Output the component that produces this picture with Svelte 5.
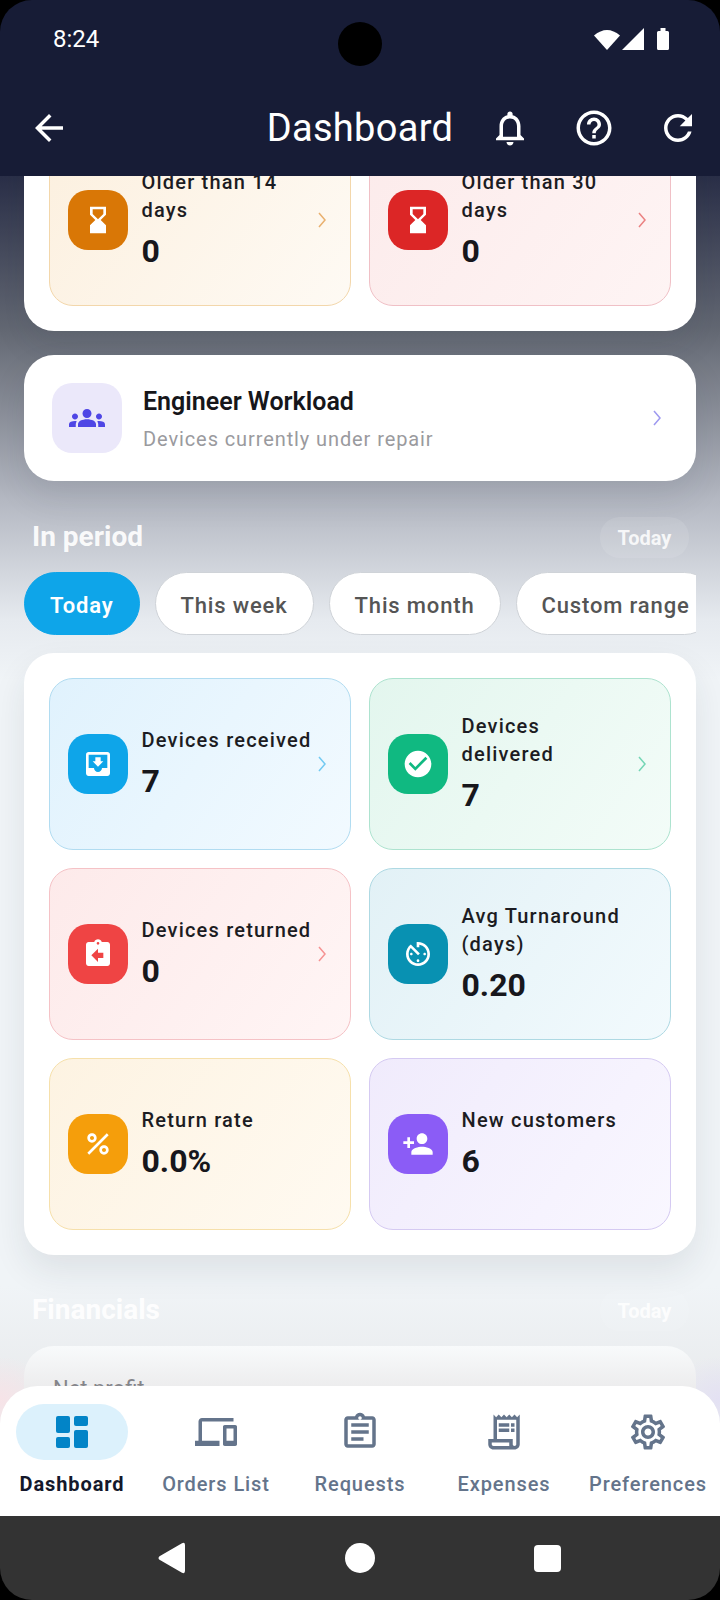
<script>
  const icons = {
    hourglass: 'M18 22l-.01-6L14 12l3.99-4.01L18 2H6v6l4 4-4 3.99V22h12zM8 7.5V4h8v3.5l-4 4-4-4z',
    inbox: 'M19 3H4.99c-1.11 0-1.98.89-1.98 2L3 19c0 1.1.88 2 1.99 2H19c1.1 0 2-.9 2-2V5c0-1.11-.9-2-2-2zm0 12h-4c0 1.66-1.35 3-3 3s-3-1.34-3-3H4.99V5H19v10zm-3-5h-2V7h-4v3H8l4 4 4-4z',
    check: 'M12 2C6.48 2 2 6.48 2 12s4.48 10 10 10 10-4.48 10-10S17.52 2 12 2zm-2 15l-5-5 1.41-1.41L10 14.17l7.59-7.59L19 8l-9 9z',
    ret: 'M19 3h-4.18C14.4 1.84 13.3 1 12 1c-1.3 0-2.4.84-2.82 2H5c-1.1 0-2 .9-2 2v14c0 1.1.9 2 2 2h14c1.1 0 2-.9 2-2V5c0-1.1-.9-2-2-2zm-7 0c.55 0 1 .45 1 1s-.45 1-1 1-1-.45-1-1 .45-1 1-1zm4 12h-4v3l-5-5 5-5v3h4v4z',
    timer: 'M11 17c0 .55.45 1 1 1s1-.45 1-1-.45-1-1-1-1 .45-1 1zm0-14v4h2V5.08c3.39.49 6 3.39 6 6.92 0 3.87-3.13 7-7 7s-7-3.13-7-7c0-1.68.59-3.22 1.58-4.42L12 13l1.41-1.41-6.8-6.8v.02C4.42 6.45 3 9.05 3 12c0 4.97 4.02 9 9 9 4.97 0 9-4.03 9-9s-4.03-9-9-9h-1zm7 9c0-.55-.45-1-1-1s-1 .45-1 1 .45 1 1 1 1-.45 1-1zM6 12c0 .55.45 1 1 1s1-.45 1-1-.45-1-1-1-1 .45-1 1z',
    percent: 'M7.5 11C9.43 11 11 9.43 11 7.5S9.43 4 7.5 4 4 5.57 4 7.5 5.57 11 7.5 11zm0-5C8.33 6 9 6.67 9 7.5S8.33 9 7.5 9 6 8.33 6 7.5 6.67 6 7.5 6zM4.0025 18.5832 18.59 3.996 20.0042 5.4102 5.4167 19.9974zM16.5 13c-1.93 0-3.5 1.57-3.5 3.5s1.57 3.5 3.5 3.5 3.5-1.57 3.5-3.5-1.57-3.5-3.5-3.5zm0 5c-.83 0-1.5-.67-1.5-1.5s.67-1.5 1.5-1.5 1.5.67 1.5 1.5-.67 1.5-1.5 1.5z',
    person: 'M15 12c2.21 0 4-1.79 4-4s-1.79-4-4-4-4 1.79-4 4 1.79 4 4 4zm-9-2V7H4v3H1v2h3v3h2v-3h3v-2H6zm9 4c-2.67 0-8 1.34-8 4v2h16v-2c0-2.66-5.33-4-8-4z',
    groups: 'M12 12.75c1.63 0 3.07.39 4.24.9 1.08.48 1.76 1.56 1.76 2.73V18H6v-1.61c0-1.18.68-2.26 1.76-2.73 1.17-.52 2.61-.91 4.24-.91zM4 13c1.1 0 2-.9 2-2s-.9-2-2-2-2 .9-2 2 .9 2 2 2zm1.13 1.1c-.37-.06-.74-.1-1.13-.1-.99 0-1.93.21-2.78.58C.48 14.9 0 15.62 0 16.43V18h4.5v-1.61c0-.83.23-1.61.63-2.29zM20 13c1.1 0 2-.9 2-2s-.9-2-2-2-2 .9-2 2 .9 2 2 2zm4 3.43c0-.81-.48-1.53-1.22-1.85-.85-.37-1.79-.58-2.78-.58-.39 0-.76.04-1.13.1.4.68.63 1.46.63 2.29V18H24v-1.57zM12 6c1.66 0 3 1.34 3 3s-1.34 3-3 3-3-1.34-3-3 1.34-3 3-3z',
    devices: 'M4 6h18V4H4c-1.1 0-2 .9-2 2v11H0v3h14v-3H4V6zm19 2h-6c-.55 0-1 .45-1 1v10c0 .55.45 1 1 1h6c.55 0 1-.45 1-1V9c0-.55-.45-1-1-1zm-1 9h-4v-7h4v7z',
    assignment: 'M19 3h-4.18C14.4 1.84 13.3 1 12 1c-1.3 0-2.4.84-2.82 2H5c-1.1 0-2 .9-2 2v14c0 1.1.9 2 2 2h14c1.1 0 2-.9 2-2V5c0-1.1-.9-2-2-2zm-7 0c.55 0 1 .45 1 1s-.45 1-1 1-1-.45-1-1 .45-1 1-1zm7 16H5V5h14v14zM7 7h10v2H7zm0 4h10v2H7zm0 4h7v2H7z',
    receipt: 'M19.5 3.5 18 2l-1.5 1.5L15 2l-1.5 1.5L12 2l-1.5 1.5L9 2 7.5 3.5 6 2v14H3v3c0 1.66 1.34 3 3 3h12c1.66 0 3-1.34 3-3V2l-1.5 1.5zM15 20H6c-.55 0-1-.45-1-1v-1h10v2zm4-1c0 .55-.45 1-1 1s-1-.45-1-1v-3H8V5h11v14zM9 7h6v2H9zM16 7h2v2h-2zM9 10h6v2H9zM16 10h2v2h-2z',
    settings: 'M19.43 12.98c.04-.32.07-.64.07-.98 0-.34-.03-.66-.07-.98l2.11-1.65c.19-.15.24-.42.12-.64l-2-3.46c-.09-.16-.26-.25-.44-.25-.06 0-.12.01-.17.03l-2.49 1c-.52-.4-1.08-.73-1.69-.98l-.38-2.65C14.46 2.18 14.25 2 14 2h-4c-.25 0-.46.18-.49.42l-.38 2.65c-.61.25-1.17.59-1.69.98l-2.49-1c-.06-.02-.12-.03-.18-.03-.17 0-.34.09-.43.25l-2 3.46c-.13.22-.07.49.12.64l2.11 1.65c-.04.32-.07.65-.07.98 0 .33.03.66.07.98l-2.11 1.65c-.19.15-.24.42-.12.64l2 3.46c.09.16.26.25.44.25.06 0 .12-.01.17-.03l2.49-1c.52.4 1.08.73 1.69.98l.38 2.65c.03.24.24.42.49.42h4c.25 0 .46-.18.49-.42l.38-2.65c.61-.25 1.17-.59 1.69-.98l2.49 1c.06.02.12.03.18.03.17 0 .34-.09.43-.25l2-3.46c.12-.22.07-.49-.12-.64l-2.11-1.65zm-1.98-1.71c.04.31.05.52.05.73 0 .21-.02.43-.05.73l-.14 1.13.89.7 1.08.84-.7 1.21-1.27-.51-1.04-.42-.9.68c-.43.32-.84.56-1.25.73l-1.06.43-.16 1.13-.2 1.35h-1.4l-.19-1.35-.16-1.13-1.06-.43c-.43-.18-.83-.41-1.23-.71l-.91-.7-1.06.43-1.27.51-.7-1.21 1.08-.84.89-.7-.14-1.13c-.03-.31-.05-.54-.05-.74s.02-.43.05-.73l.14-1.13-.89-.7-1.08-.84.7-1.21 1.27.51 1.04.42.9-.68c.43-.32.84-.56 1.25-.73l1.06-.43.16-1.13.2-1.35h1.39l.19 1.35.16 1.13 1.06.43c.43.18.83.41 1.23.71l.91.7 1.06-.43 1.27-.51.7 1.21-1.07.85-.89.7.14 1.13zM12 8c-2.21 0-4 1.79-4 4s1.79 4 4 4 4-1.79 4-4-1.79-4-4-4zm0 6c-1.1 0-2-.9-2-2s.9-2 2-2 2 .9 2 2-.9 2-2 2z',
    bell: 'M12 22c1.1 0 2-.9 2-2h-4c0 1.1.9 2 2 2zm6-6v-5c0-3.07-1.63-5.64-4.5-6.32V4c0-.83-.67-1.5-1.5-1.5s-1.5.67-1.5 1.5v.68C7.64 5.36 6 7.92 6 11v5l-2 2v1h16v-1l-2-2zm-2 1H8v-6c0-2.48 1.51-4.5 4-4.5s4 2.02 4 4.5v6z',
    help: 'M11 18h2v-2h-2v2zm1-16C6.48 2 2 6.48 2 12s4.48 10 10 10 10-4.48 10-10S17.52 2 12 2zm0 18c-4.41 0-8-3.59-8-8s3.59-8 8-8 8 3.59 8 8-3.59 8-8 8zm0-14c-2.21 0-4 1.79-4 4h2c0-1.1.9-2 2-2s2 .9 2 2c0 2-3 1.75-3 5h2c0-2.25 3-2.5 3-5 0-2.21-1.79-4-4-4z',
    refresh: 'M17.65 6.35C16.2 4.9 14.21 4 12 4c-4.42 0-7.99 3.58-7.99 8s3.57 8 7.99 8c3.73 0 6.84-2.55 7.73-6h-2.08c-.82 2.33-3.04 4-5.65 4-3.31 0-6-2.69-6-6s2.69-6 6-6c1.66 0 3.14.69 4.22 1.78L13 11h7V4l-2.35 2.35z',
    back: 'M20 11H7.83l5.59-5.59L12 4l-8 8 8 8 1.41-1.41L7.83 13H20v-2z'
  };

  const topTiles = [
    { cls: 'orange', icon: 'hourglass', label: 'Older than 14 days', value: '0', arrow: true },
    { cls: 'crimson', icon: 'hourglass', label: 'Older than 30 days', value: '0', arrow: true }
  ];
  const tiles = [
    { cls: 'blue', icon: 'inbox', label: 'Devices received', value: '7', arrow: true },
    { cls: 'green', icon: 'check', label: 'Devices delivered', value: '7', arrow: true, narrow: true },
    { cls: 'red', icon: 'ret', label: 'Devices returned', value: '0', arrow: true },
    { cls: 'teal', icon: 'timer', label: 'Avg Turnaround (days)', value: '0.20' },
    { cls: 'amber', icon: 'percent', label: 'Return rate', value: '0.0%' },
    { cls: 'purple', icon: 'person', label: 'New customers', value: '6' }
  ];
  const chips = ['Today', 'This week', 'This month', 'Custom range'];
  const navItems = [
    { label: 'Orders List', icon: 'devices' },
    { label: 'Requests', icon: 'assignment' },
    { label: 'Expenses', icon: 'receipt' },
    { label: 'Preferences', icon: 'settings' }
  ];
</script>

{#snippet tile(t)}
  <div class="tile {t.cls}">
    <div class="tile-icon">
      <svg viewBox="0 0 24 24" width="32" height="32"><path d={icons[t.icon]} fill="#fff" /></svg>
    </div>
    <div class="tile-text" class:narrow={t.narrow}>
      <div class="tile-label">{t.label}</div>
      <div class="tile-value">{t.value}</div>
    </div>
    {#if t.arrow}
      <svg class="chev" viewBox="0 0 10 16" width="10" height="16"><path d="M2 1l6 7-6 7" fill="none" stroke="currentColor" stroke-width="1.5" /></svg>
    {/if}
  </div>
{/snippet}

<div class="phone">
  <header class="appbar">
    <div class="status">
      <span class="time">8:24</span>
      <span class="camera"></span>
      <svg class="status-icons" viewBox="0 0 78 24" width="78" height="24">
        <path d="M0 7.500 Q13 -3.500 26 7.500 L13 22z" fill="#fff" />
        <path d="M50 0v22H28z" fill="#fff" />
        <path d="M63 4.500q0-1.500 1.500-1.500h2v-3h5v3h2q1.500 0 1.500 1.500v16q0 1.500-1.500 1.500h-9q-1.500 0-1.500-1.500z" fill="#fff" />
      </svg>
    </div>
    <div class="toolbar">
      <svg class="back" viewBox="0 0 24 24" width="42" height="42"><path d={icons.back} fill="#fff" /></svg>
      <h1>Dashboard</h1>
      <div class="actions">
        <svg viewBox="0 0 24 24" width="42" height="42"><path d={icons.bell} fill="#fff" /></svg>
        <svg viewBox="0 0 24 24" width="42" height="42"><path d={icons.help} fill="#fff" /></svg>
        <svg viewBox="0 0 24 24" width="42" height="42"><path d={icons.refresh} fill="#fff" /></svg>
      </div>
    </div>
  </header>

  <main class="content">
    <div class="scroll">
      <section class="card grid">
        {#each topTiles as t}{@render tile(t)}{/each}
      </section>

      <section class="workload">
        <div class="wl-icon">
          <svg viewBox="0 0 24 24" width="36" height="36"><path d={icons.groups} fill="#4f46e5" /></svg>
        </div>
        <div class="wl-text">
          <div class="wl-title">Engineer Workload</div>
          <div class="wl-sub">Devices currently under repair</div>
        </div>
        <svg class="chev wl-chev" viewBox="0 0 10 16" width="10" height="16"><path d="M2 1l6 7-6 7" fill="none" stroke="currentColor" stroke-width="1.5" /></svg>
      </section>

      <div class="section-head">
        <h2>In period</h2>
        <span class="pill">Today</span>
      </div>

      <div class="chips">
        {#each chips as c, i}
          <button class="chip" class:active={i === 0}>{c}</button>
        {/each}
      </div>

      <section class="card grid">
        {#each tiles as t}{@render tile(t)}{/each}
      </section>

      <div class="section-head faint">
        <h2>Financials</h2>
        <span class="pill">Today</span>
      </div>

      <section class="profit">
        <div class="profit-label">Net profit</div>
      </section>
    </div>
  </main>

  <nav class="tabs">
    <div class="tab">
      <span class="tab-pill">
        <svg viewBox="0 0 32 32" width="32" height="32" fill="#0284c7">
          <rect x="0" y="0" width="14" height="17" rx="2" />
          <rect x="0" y="21" width="14" height="11" rx="2" />
          <rect x="18" y="0" width="14" height="10" rx="2" />
          <rect x="18" y="14" width="14" height="18" rx="2" />
        </svg>
      </span>
      <span class="tab-label current">Dashboard</span>
    </div>
    {#each navItems as n}
      <div class="tab">
        <span class="tab-pill plain">
          <svg viewBox="0 0 24 24" width="42" height="42"><path d={icons[n.icon]} fill="#64748b" /></svg>
        </span>
        <span class="tab-label">{n.label}</span>
      </div>
    {/each}
  </nav>

  <div class="sysnav">
    <svg class="sys-back" viewBox="0 0 28 32" width="28" height="32"><path d="M1.500 14.200 24 1.200q3-1.200 3 1.800v26q0 3-3 1.800L1.500 17.800q-2-1.800 0-3.600z" fill="#fff" /></svg>
    <span class="home"></span>
    <span class="recent"></span>
  </div>
</div>

<style>
  :global(body) {
    margin: 0;
    background: #000;
  }
  .phone {
    width: 720px;
    height: 1600px;
    display: flex;
    flex-direction: column;
    overflow: hidden;
    border-radius: 32px;
    font-family: Roboto, sans-serif;
    background: #000;
  }
  .appbar {
    height: 176px;
    flex: none;
    background: #171c36;
    color: #fff;
    position: relative;
    z-index: 2;
  }
  .status {
    height: 84px;
    padding: 0 48px 0 53px;
    display: flex;
    align-items: flex-start;
    justify-content: space-between;
    position: relative;
  }
  .time {
    font-size: 24px;
    line-height: 28px;
    margin-top: 25px;
  }
  .camera {
    position: absolute;
    left: 338px;
    top: 22px;
    width: 44px;
    height: 44px;
    border-radius: 50%;
    background: #000;
  }
  .status-icons {
    margin-top: 28px;
    overflow: visible;
  }
  .toolbar {
    height: 88px;
    display: grid;
    grid-template-columns: 1fr auto 1fr;
    align-items: center;
    padding: 0 21px;
  }
  .back {
    display: block;
    margin-left: 7px;
  }
  h1 {
    margin: 0;
    font-size: 38px;
    font-weight: 400;
    letter-spacing: 0.3px;
    line-height: 44px;
  }
  .actions {
    display: flex;
    justify-content: flex-end;
    gap: 42px;
  }
  .actions svg {
    display: block;
  }

  .content {
    flex: none;
    height: 1250px;
    margin-bottom: -40px;
    overflow: hidden;
    background:
      radial-gradient(50px 44px at 0 1224px, rgba(250, 225, 230, 0.8), rgba(250, 225, 230, 0)),
      radial-gradient(50px 44px at 100% 1224px, rgba(226, 222, 245, 0.8), rgba(226, 222, 245, 0)),
      linear-gradient(180deg, #2a2f48 0, #636873 154px, #b4b8c2 324px, #e6eaef 444px, #f0f4f7 504px, #f0f4f7 1110px, #e9ebed 1210px);
  }
  .scroll {
    margin-top: -67px;
    display: flex;
    flex-direction: column;
  }
  .card {
    margin: 0 24px;
    background: #fff;
    border-radius: 30px;
    box-shadow: 0 16px 34px rgba(30, 40, 60, 0.09);
  }
  .grid {
    padding: 25px;
    display: grid;
    grid-template-columns: 302px 302px;
    grid-auto-rows: 172px;
    gap: 18px;
  }
  .tile {
    box-sizing: border-box;
    border: 1.5px solid var(--line);
    border-radius: 24px;
    background: linear-gradient(125deg, var(--from), var(--to));
    display: flex;
    align-items: center;
    padding: 0 17.5px;
    position: relative;
  }
  .tile-icon {
    width: 60px;
    height: 60px;
    flex: none;
    border-radius: 20px;
    background: var(--accent);
    display: flex;
    align-items: center;
    justify-content: center;
  }
  .tile-text {
    margin-left: 14px;
    flex: 1;
    min-width: 0;
    padding: 0 6px 2px 0;
  }
  .narrow {
    padding-right: 60px;
  }
  .tile-label {
    font-size: 20px;
    line-height: 28px;
    font-weight: 500;
    letter-spacing: 1.2px;
    color: #1c1c22;
  }
  .tile-value {
    font-size: 32px;
    line-height: 38px;
    font-weight: 700;
    margin-top: 8px;
    color: #17171c;
  }
  .chev {
    color: var(--accent);
    opacity: 0.55;
    flex: none;
    position: absolute;
    right: 23px;
    top: 50%;
    margin-top: -8px;
  }
  .orange { --line: #f3d7ab; --from: #fcf0df; --to: #fefaf4; --accent: #d97706; }
  .crimson { --line: #f0c0c6; --from: #fcebeb; --to: #fef4f4; --accent: #dc2626; }
  .blue { --line: #b1dcf1; --from: #e0f2fd; --to: #f2faff; --accent: #0ea5e9; }
  .green { --line: #ade3cf; --from: #e3f6ee; --to: #f3fcf8; --accent: #10b981; }
  .red { --line: #f5c2c6; --from: #fdeaea; --to: #fff5f5; --accent: #ef4444; }
  .teal { --line: #aed9e3; --from: #e2f1f6; --to: #f2fafd; --accent: #0891b2; }
  .amber { --line: #f6e0ab; --from: #fdf3e2; --to: #fffaf1; --accent: #f59e0b; }
  .purple { --line: #d5caf2; --from: #f0ebfc; --to: #f9f7ff; --accent: #8b5cf6; }

  .workload {
    margin: 24px 24px 0;
    height: 126px;
    box-sizing: border-box;
    padding: 0 28px;
    background: #fff;
    border-radius: 30px;
    box-shadow: 0 16px 34px rgba(30, 40, 60, 0.1);
    display: flex;
    align-items: center;
    position: relative;
    --accent: #4f46e5;
  }
  .wl-icon {
    width: 70px;
    height: 70px;
    flex: none;
    border-radius: 20px;
    background: #ebe8fa;
    display: flex;
    align-items: center;
    justify-content: center;
  }
  .wl-text {
    margin-left: 21px;
    padding-top: 2px;
  }
  .wl-title {
    font-size: 25px;
    line-height: 34px;
    font-weight: 600;
    color: #16161a;
  }
  .wl-sub {
    font-size: 20px;
    line-height: 28px;
    letter-spacing: 0.9px;
    margin-top: 6px;
    color: #9a9a9e;
  }
  .wl-chev {
    right: 34px;
  }

  .section-head {
    margin: 36px 24px 0 32px;
    height: 41px;
    display: flex;
    align-items: center;
    justify-content: space-between;
    padding-right: 7px;
  }
  h2 {
    margin: 0;
    font-size: 28px;
    font-weight: 700;
    color: rgba(255, 255, 255, 0.92);
    position: relative;
    top: -1px;
  }
  .pill {
    height: 41px;
    width: 89px;
    border-radius: 20px;
    background: rgba(255, 255, 255, 0.1);
    color: rgba(255, 255, 255, 0.85);
    font-size: 20px;
    font-weight: 700;
    display: flex;
    align-items: center;
    justify-content: center;
  }
  .faint {
    margin-top: 35px;
  }
  .chips {
    margin: 14px 24px 18px;
    height: 63px;
    display: flex;
    gap: 15px;
    overflow: hidden;
  }
  .chip {
    flex: none;
    height: 63px;
    padding: 3px 25px 0;
    border-radius: 32px;
    border: 1.5px solid #cfd3d8;
    background: #fff;
    color: #555;
    font-family: inherit;
    font-size: 22px;
    font-weight: 500;
    letter-spacing: 0.85px;
  }
  .chip.active {
    background: #0ea5e9;
    border-color: #0ea5e9;
    color: #fff;
    font-weight: 600;
  }
  .profit {
    margin: 15px 24px 0;
    height: 120px;
    padding: 31px 29px 0;
    box-sizing: border-box;
    border-radius: 30px;
    background: linear-gradient(180deg, #f8fafb, #ededee 40px);
  }
  .profit-label {
    font-size: 22px;
    line-height: 24px;
    color: #85858a;
  }

  .tabs {
    flex: none;
    height: 130px;
    background: #fff;
    border-radius: 38px 38px 0 0;
    display: grid;
    grid-template-columns: repeat(5, 144px);
    position: relative;
    z-index: 1;
  }
  .tab {
    display: flex;
    flex-direction: column;
    align-items: center;
    padding-top: 18px;
  }
  .tab-pill {
    width: 112px;
    height: 56px;
    border-radius: 28px;
    background: #dcf1fc;
    display: flex;
    align-items: center;
    justify-content: center;
  }
  .tab-pill.plain {
    background: transparent;
  }
  .tab-label {
    margin-top: 10px;
    font-size: 20px;
    line-height: 28px;
    font-weight: 500;
    letter-spacing: 0.9px;
    color: #64748b;
    white-space: nowrap;
  }
  .tab-label.current {
    color: #14182b;
    font-weight: 700;
  }
  .sysnav {
    flex: none;
    height: 84px;
    background: #333;
    display: grid;
    grid-template-columns: repeat(3, 187px);
    justify-content: center;
    justify-items: center;
    align-items: center;
    position: relative;
    z-index: 1;
  }
  .sys-back {
    margin-right: 2px;
  }
  .home {
    width: 30px;
    height: 30px;
    border-radius: 50%;
    background: #fff;
  }
  .recent {
    width: 27px;
    height: 27px;
    border-radius: 4px;
    background: #fff;
  }
</style>
